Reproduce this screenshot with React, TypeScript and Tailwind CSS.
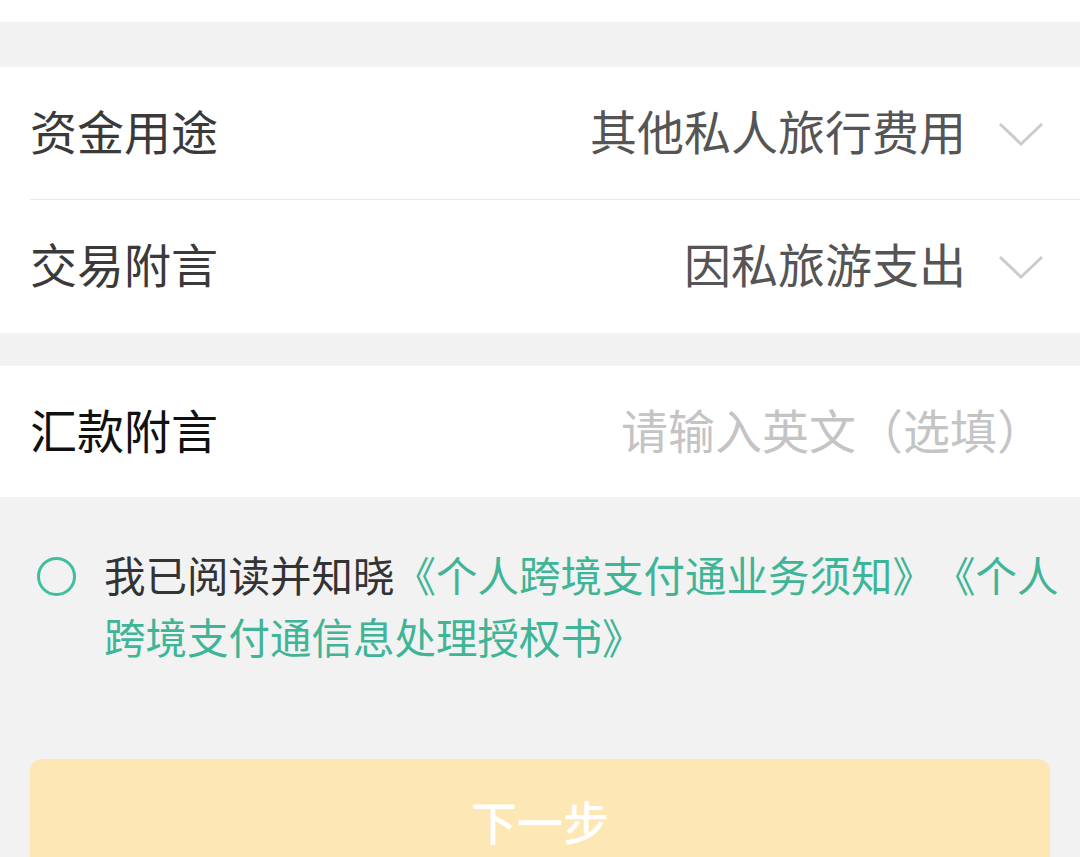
import { type ReactNode } from "react";

const font = { fontFamily: '"Noto Sans CJK SC", "Noto Sans", sans-serif' };

function Chevron() {
  return (
    <svg width="46" height="26" viewBox="0 0 46 26" className="shrink-0">
      <polyline points="2,3 23,23 44,3" fill="none" stroke="#cbcbcb" strokeWidth="3" />
    </svg>
  );
}

function SelectRow({ label, value, divider }: { label: string; value: string; divider?: boolean }) {
  return (
    <div className="relative flex h-[133px] items-center justify-between pl-[30px] pr-[36px]">
      <span className="-translate-y-[4px] text-[47px] leading-none text-[#3a3a3a]">{label}</span>
      <div className="flex items-center gap-[32px]">
        <span className="-translate-y-[4px] text-[47px] leading-none text-[#555]">{value}</span>
        <Chevron />
      </div>
      {divider && <div className="absolute bottom-0 left-[30px] right-0 h-px bg-[#e9e9e9]" />}
    </div>
  );
}

function Link({ children }: { children: ReactNode }) {
  return <span className="text-[#3fb597]">{children}</span>;
}

export default function App() {
  return (
    <div className="min-h-[857px] bg-[#f2f2f2] [text-spacing-trim:space-all]" style={font}>
      <div className="h-[22px] bg-white" />
      <div className="h-[45px]" />

      <div className="bg-white">
        <SelectRow label="资金用途" value="其他私人旅行费用" divider />
        <SelectRow label="交易附言" value="因私旅游支出" />
      </div>

      <div className="h-[33px]" />

      <div className="flex h-[131px] items-center justify-between bg-white pl-[30px] pr-[36px]">
        <span className="-translate-y-[3px] text-[47px] leading-none text-[#111]">汇款附言</span>
        <span className="-translate-y-[3px] text-[47px] leading-none text-[#c4c4c4]">请输入英文（选填）</span>
      </div>

      <div className="flex gap-[28px] pl-[37px] pt-[46px]">
        <div className="flex h-[62px] items-center">
          <div className="size-[39px] translate-y-[2px] rounded-full border-[3px] border-[#3fbf9f]" />
        </div>
        <p className="text-[41.5px] leading-[62px] text-[#333]">
          我已阅读并知晓
          <Link>《个人跨境支付通业务须知》《个人</Link>
          <br />
          <Link>跨境支付通信息处理授权书》</Link>
        </p>
      </div>

      <div className="px-[30px] pt-[92px]">
        <div className="flex h-[132px] items-center justify-center rounded-[12px] bg-[#fde7b4]">
          <span className="-translate-y-[5px] text-[46px] font-medium leading-none text-white">下一步</span>
        </div>
      </div>
    </div>
  );
}
